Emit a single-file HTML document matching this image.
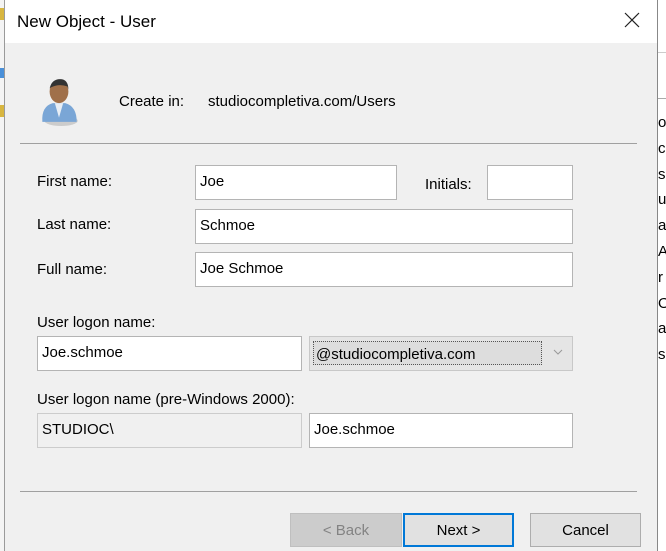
<!DOCTYPE html>
<html><head><style>
body{margin:0;width:666px;height:551px;overflow:hidden;background:#fff;font-family:"Liberation Sans",sans-serif;font-size:15px;color:#000;position:relative}
.a{position:absolute}
.in{position:absolute;background:#fff;border:1px solid #b4b4b4;box-sizing:border-box;padding:7px 0 0 4px;font-size:15px}
.lb{position:absolute;font-size:15px}
.btn{position:absolute;box-sizing:border-box;background:#e1e1e1;border:1px solid #adadad;text-align:center;line-height:34px;font-size:15px}
</style></head><body>
<div class="a" style="left:0;top:0;width:4px;height:551px;background:#f4f4f4"></div>
<div class="a" style="left:0;top:8px;width:4px;height:12px;background:#d8b640"></div>
<div class="a" style="left:0;top:68px;width:4px;height:10px;background:#4a90d9"></div>
<div class="a" style="left:0;top:105px;width:4px;height:12px;background:#d8b640"></div>
<div class="a" style="left:4px;top:0;width:1px;height:551px;background:#9a9a9a"></div>
<div class="a" style="left:5px;top:0;width:652px;height:551px;background:#f0f0f0"></div>
<div class="a" style="left:5px;top:0;width:652px;height:43px;background:#fff"></div>
<div class="a" style="left:17px;top:12px;font-size:17px">New Object - User</div>
<svg class="a" style="left:624px;top:12px" width="16" height="16"><path d="M1 1L15 15M15 1L1 15" stroke="#222" stroke-width="1.2"/></svg>
<div class="a" style="left:657px;top:0;width:1px;height:551px;background:#888"></div>
<div class="a" style="left:658px;top:52px;width:8px;height:1px;background:#ccc"></div>
<div class="a" style="left:658px;top:98px;width:8px;height:1px;background:#aaa"></div>
<div class="a" style="left:658px;top:110px;line-height:25.8px;font-size:15px;white-space:pre">o
c
s
u
a
A
r
O
a
s</div>
<svg class="a" style="left:38px;top:76px" width="42" height="50" viewBox="0 0 40 48">
<ellipse cx="22" cy="43" rx="16" ry="5" fill="#ccc"/>
<path d="M4 44 Q3 29 14 26 L26 26 Q37 29 37 44 Z" fill="#7aa6d6"/>
<path d="M16 26 L20 40 L24 26Z" fill="#e8eef5"/>
<ellipse cx="20" cy="15" rx="9" ry="11" fill="#a0704a"/>
<path d="M11 12 Q13 3 21 3 Q29 3 29 13 L28 10 Q20 7 12 11Z" fill="#333"/>
</svg>
<div class="lb" style="left:119px;top:93px">Create in:</div>
<div class="lb" style="left:208px;top:93px">studiocompletiva.com/Users</div>
<div class="a" style="left:20px;top:143px;width:617px;height:1px;background:#a0a0a0"></div>
<div class="lb" style="left:37px;top:173px">First name:</div>
<div class="in" style="left:195px;top:165px;width:202px;height:35px">Joe</div>
<div class="lb" style="left:425px;top:176px">Initials:</div>
<div class="in" style="left:487px;top:165px;width:86px;height:35px"></div>
<div class="lb" style="left:37px;top:216px">Last name:</div>
<div class="in" style="left:195px;top:209px;width:378px;height:35px">Schmoe</div>
<div class="lb" style="left:37px;top:261px">Full name:</div>
<div class="in" style="left:195px;top:252px;width:378px;height:35px">Joe Schmoe</div>
<div class="lb" style="left:37px;top:314px">User logon name:</div>
<div class="in" style="left:37px;top:336px;width:265px;height:35px">Joe.schmoe</div>
<div class="a" style="left:309px;top:336px;width:264px;height:35px;box-sizing:border-box;background:#e5e5e5;border:1px solid #c8c8c8"></div>
<div class="a" style="left:313px;top:341px;width:229px;height:24px;box-sizing:border-box;border:1px dotted #555;background:#ddd;padding:4px 0 0 2px">@studiocompletiva.com</div>
<svg class="a" style="left:553px;top:349px" width="10" height="7"><path d="M1 1L5 5L9 1" stroke="#999" fill="none"/></svg>
<div class="lb" style="left:37px;top:391px">User logon name (pre-Windows 2000):</div>
<div class="in" style="left:37px;top:413px;width:265px;height:35px;background:#f0f0f0;border-color:#ccc">STUDIOC\</div>
<div class="in" style="left:309px;top:413px;width:264px;height:35px">Joe.schmoe</div>
<div class="a" style="left:20px;top:491px;width:617px;height:1px;background:#a0a0a0"></div>
<div class="btn" style="left:290px;top:513px;width:112px;height:34px;background:#cccccc;border-color:#bfbfbf;color:#838383">&lt; Back</div>
<div class="btn" style="left:403px;top:513px;width:111px;height:34px;border:2px solid #0078d7;line-height:32px">Next &gt;</div>
<div class="btn" style="left:530px;top:513px;width:111px;height:34px">Cancel</div>
</body></html>
